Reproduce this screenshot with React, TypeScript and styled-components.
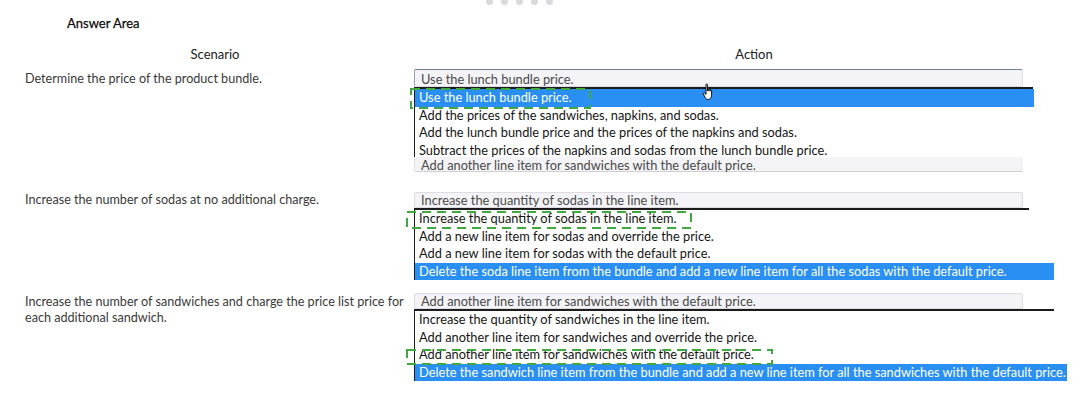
import React from 'react';
import styled, { createGlobalStyle } from 'styled-components';

const GlobalStyle = createGlobalStyle`
  html, body {
    margin: 0;
    padding: 0;
    background: #ffffff;
    overflow: hidden;
  }
  body {
    font-family: Lato, "Noto Sans", sans-serif;
  }
`;

const Page = styled.div`
  position: relative;
  width: 1078px;
  height: 399px;
  padding-top: 15px;
  box-sizing: border-box;
  overflow: hidden;
`;

const Dots = styled.div`
  position: absolute;
  top: -2px;
  left: 486px;
  display: flex;
  gap: 8px;
`;

const Dot = styled.span`
  width: 7px;
  height: 7px;
  border-radius: 50%;
  background: #dadade;
`;

const Title = styled.div`
  padding-left: 67px;
  font-size: 13px;
  line-height: 16px;
  font-weight: 400;
  color: #0c0c0c;
  -webkit-text-stroke: 0.25px #0c0c0c;
`;

const HeaderRow = styled.div`
  display: flex;
  margin-top: 15px;
`;

const HeaderCell = styled.div<{ $left: number; $width: number }>`
  margin-left: ${p => p.$left}px;
  width: ${p => p.$width}px;
  flex-shrink: 0;
  text-align: center;
  font-size: 13px;
  line-height: 16px;
  color: #222;
`;

const Rows = styled.div`
  margin-top: 7px;
`;

const Row = styled.div<{ $after: number }>`
  display: grid;
  grid-template-columns: 380px 1fr;
  column-gap: 9px;
  padding-left: 25px;
  margin-bottom: ${p => p.$after}px;
`;

const Scenario = styled.div<{ $top: number }>`
  padding-top: ${p => p.$top}px;
  font-size: 12.6px;
  line-height: 16px;
  color: #3a3a3a;
`;

const ActionCell = styled.div`
  position: relative;
`;

const Select = styled.div<{ $height: number; $focused?: boolean }>`
  width: 609px;
  height: ${p => p.$height}px;
  box-sizing: border-box;
  padding-left: 6px;
  padding-top: ${p => (p.$focused ? 2 : 1)}px;
  background: #f4f3f7;
  border: 1px solid #dcdce2;
  border-top-color: ${p => (p.$focused ? '#6f7b98' : '#dcdce2')};
  border-left-color: ${p => (p.$focused ? '#9aa3b8' : '#dcdce2')};
  border-radius: 2px;
  font-size: 12.8px;
  line-height: ${p => p.$height - 3}px;
  color: #4a4a4a;
  white-space: nowrap;
`;

const List = styled.div<{ $width: number }>`
  width: ${p => p.$width}px;
  box-sizing: border-box;
  border-top: 2px solid #1c1c1c;
  border-left: 1px solid #1c1c1c;
`;

const Option = styled.div<{ $selected?: boolean; $width?: number }>`
  height: 17.5px;
  line-height: 17.5px;
  padding-left: 4px;
  font-size: 12.8px;
  white-space: nowrap;
  color: ${p => (p.$selected ? '#ffffff' : '#151515')};
  background: ${p => (p.$selected ? '#2a8ff2' : 'transparent')};
  width: ${p => (p.$width ? `${p.$width}px` : 'auto')};
  box-sizing: border-box;
`;

const GhostSelect = styled.div`
  width: 609px;
  height: 15px;
  margin-top: -2px;
  box-sizing: border-box;
  padding-left: 6px;
  padding-top: 1px;
  background: #f4f3f7;
  border-bottom: 1px solid #cfcfd4;
  border-left: 1px solid #dcdce2;
  border-radius: 0 0 2px 2px;
  font-size: 12.8px;
  line-height: 14px;
  color: #4a4a4a;
  white-space: nowrap;
`;

const Overlay = styled.svg<{ $left: number; $top: number }>`
  position: absolute;
  left: ${p => p.$left}px;
  top: ${p => p.$top}px;
  overflow: visible;
  pointer-events: none;
`;

function DashBox({ left, top, width, height }: { left: number; top: number; width: number; height: number }) {
  return (
    <Overlay $left={left} $top={top} width={width} height={height}>
      <rect
        x={1}
        y={1}
        width={width - 2}
        height={height - 2}
        fill="none"
        stroke="#3fa83f"
        strokeWidth={2}
        strokeDasharray="9 6"
      />
    </Overlay>
  );
}

function HandCursor({ left, top }: { left: number; top: number }) {
  return (
    <Overlay $left={left} $top={top} width={14} height={18} viewBox="0 0 14 18">
      <path
        d="M4 1.5c0-.8 1.4-.8 1.4 0V8V6.2c0-.8 1.4-.8 1.4 0V8V6.8c0-.8 1.4-.8 1.4 0V8.2V7.6c0-.8 1.4-.8 1.4 0v4.6c0 2.2-1.3 4.3-3.6 4.3H6.2c-1.4 0-2.2-.8-3-2L1.3 11c-.5-.8.5-1.6 1.2-.9L4 11.4Z"
        fill="#ffffff"
        stroke="#111"
        strokeWidth={1}
        strokeLinejoin="round"
      />
    </Overlay>
  );
}

type Block = {
  scenario: React.ReactNode;
  scenarioTop: number;
  current: string;
  selectHeight: number;
  focused?: boolean;
  listWidth: number;
  options: string[];
  selected: number;
  selectedWidth: number;
  ghost?: string;
  after: number;
  dash: { left: number; top: number; width: number; height: number };
  cursor?: boolean;
};

const blocks: Block[] = [
  {
    scenario: 'Determine the price of the product bundle.',
    scenarioTop: 2,
    current: 'Use the lunch bundle price.',
    selectHeight: 18,
    focused: true,
    listWidth: 619,
    options: [
      'Use the lunch bundle price.',
      'Add the prices of the sandwiches, napkins, and sodas.',
      'Add the lunch bundle price and the prices of the napkins and sodas.',
      'Subtract the prices of the napkins and sodas from the lunch bundle price.',
    ],
    selected: 0,
    selectedWidth: 619,
    ghost: 'Add another line item for sandwiches with the default price.',
    after: 20,
    dash: { left: -4, top: 19, width: 181, height: 21 },
    cursor: true,
  },
  {
    scenario: 'Increase the number of sodas at no additional charge.',
    scenarioTop: 0,
    current: 'Increase the quantity of sodas in the line item.',
    selectHeight: 16,
    listWidth: 615,
    options: [
      'Increase the quantity of sodas in the line item.',
      'Add a new line item for sodas and override the price.',
      'Add a new line item for sodas with the default price.',
      'Delete the soda line item from the bundle and add a new line item for all the sodas with the default price.',
    ],
    selected: 3,
    selectedWidth: 639,
    after: 13,
    dash: { left: -8, top: 19, width: 286, height: 18 },
  },
  {
    scenario: 'Increase the number of sandwiches and charge the price list price for each additional sandwich.',
    scenarioTop: 1,
    current: 'Add another line item for sandwiches with the default price.',
    selectHeight: 16,
    listWidth: 640,
    options: [
      'Increase the quantity of sandwiches in the line item.',
      'Add another line item for sandwiches and override the price.',
      'Add another line item for sandwiches with the default price.',
      'Delete the sandwich line item from the bundle and add a new line item for all the sandwiches with the default price.',
    ],
    selected: 3,
    selectedWidth: 652,
    after: 0,
    dash: { left: -8, top: 56, width: 367, height: 16 },
  },
];

export default function App() {
  return (
    <>
      <GlobalStyle />
      <Page>
        <Dots>
          {[0, 1, 2, 3, 4].map(i => (
            <Dot key={i} />
          ))}
        </Dots>
        <Title>Answer Area</Title>
        <HeaderRow>
          <HeaderCell $left={25} $width={380}>Scenario</HeaderCell>
          <HeaderCell $left={9} $width={680}>Action</HeaderCell>
        </HeaderRow>
        <Rows>
          {blocks.map((b, i) => (
            <Row key={i} $after={b.after}>
              <Scenario $top={b.scenarioTop}>{b.scenario}</Scenario>
              <ActionCell>
                <Select $height={b.selectHeight} $focused={b.focused}>
                  {b.current}
                </Select>
                <List $width={b.listWidth}>
                  {b.options.map((o, j) => (
                    <Option
                      key={j}
                      $selected={j === b.selected}
                      $width={j === b.selected ? b.selectedWidth : undefined}
                    >
                      {o}
                    </Option>
                  ))}
                </List>
                {b.ghost && <GhostSelect>{b.ghost}</GhostSelect>}
                <DashBox {...b.dash} />
                {b.cursor && <HandCursor left={288} top={14} />}
              </ActionCell>
            </Row>
          ))}
        </Rows>
      </Page>
    </>
  );
}
